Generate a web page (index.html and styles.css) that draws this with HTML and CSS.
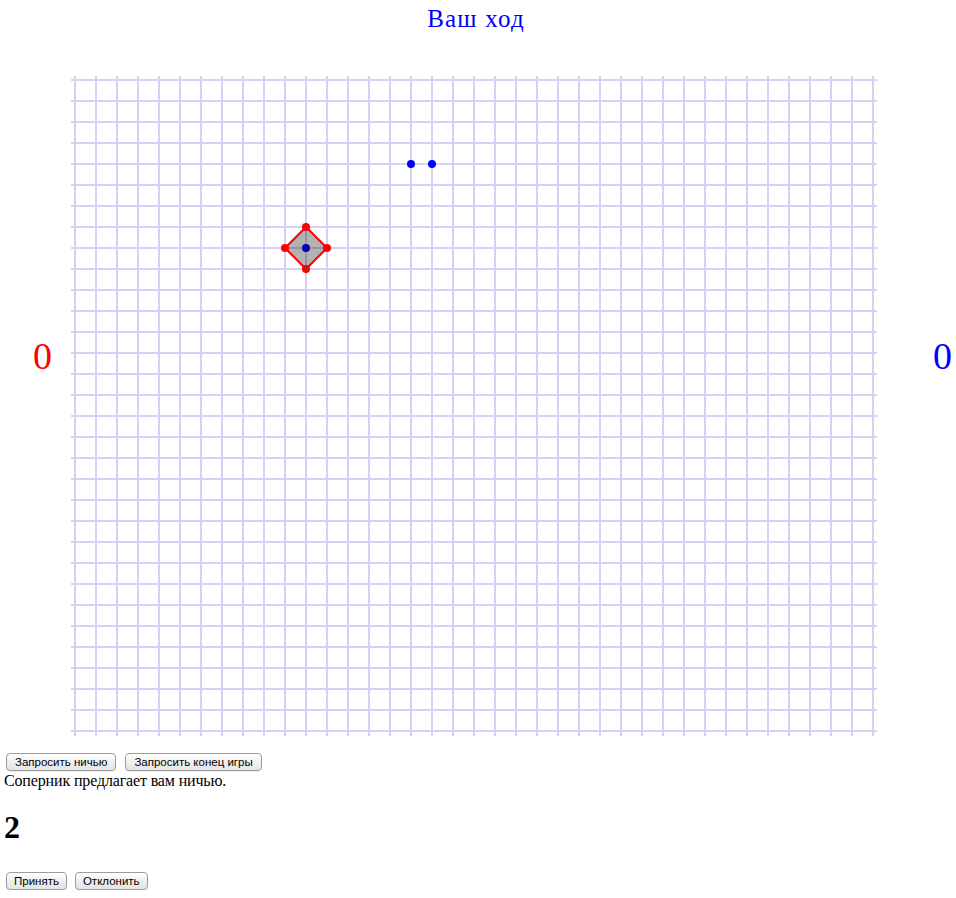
FILE: index.html
```html
<!DOCTYPE html>
<html lang="ru">
<head>
<meta charset="utf-8">
<title>Игра</title>
<link rel="stylesheet" href="styles.css">
</head>
<body>
<div class="title">Ваш ход</div>
<div class="board">
  <div class="score score-red">0</div>
  <svg class="field" width="808" height="664" viewBox="0 0 808 664" xmlns="http://www.w3.org/2000/svg">
    <path class="grid" d="M5 2V662M26 2V662M47 2V662M68 2V662M89 2V662M110 2V662M131 2V662M152 2V662M173 2V662M194 2V662M215 2V662M236 2V662M257 2V662M278 2V662M299 2V662M320 2V662M341 2V662M362 2V662M383 2V662M404 2V662M425 2V662M446 2V662M467 2V662M488 2V662M509 2V662M530 2V662M551 2V662M572 2V662M593 2V662M614 2V662M635 2V662M656 2V662M677 2V662M698 2V662M719 2V662M740 2V662M761 2V662M782 2V662M803 2V662
    M1 6H807M1 27H807M1 48H807M1 69H807M1 90H807M1 111H807M1 132H807M1 153H807M1 174H807M1 195H807M1 216H807M1 237H807M1 258H807M1 279H807M1 300H807M1 321H807M1 342H807M1 363H807M1 384H807M1 405H807M1 426H807M1 447H807M1 468H807M1 489H807M1 510H807M1 531H807M1 552H807M1 573H807M1 594H807M1 615H807M1 636H807M1 657H807"/>
    <circle class="dot-blue" cx="341" cy="90" r="4"/>
    <circle class="dot-blue" cx="362" cy="90" r="4"/>
    <circle class="dot-blue" cx="236" cy="174" r="4"/>
    <polygon class="area" points="236,153 257,174 236,195 215,174"/>
    <circle class="dot-red" cx="236" cy="153" r="4"/>
    <circle class="dot-red" cx="257" cy="174" r="4"/>
    <circle class="dot-red" cx="236" cy="195" r="4"/>
    <circle class="dot-red" cx="215" cy="174" r="4"/>
  </svg>
  <div class="score score-blue">0</div>
</div>
<div class="controls">
  <div class="actions actions-top">
    <button class="btn" type="button">Запросить ничью</button>
    <button class="btn" type="button">Запросить конец игры</button>
  </div>
  <p class="notice">Соперник предлагает вам ничью.</p>
  <h1 class="counter">2</h1>
  <div class="actions actions-bottom">
    <button class="btn btn-small" type="button">Принять</button>
    <button class="btn btn-small" type="button">Отклонить</button>
  </div>
</div>
</body>
</html>
```
FILE: styles.css
```css
html, body {
  margin: 0;
  padding: 0;
  background: #ffffff;
}

body {
  font-family: "Liberation Serif", "Times New Roman", serif;
  color: #000000;
}

.title {
  text-align: center;
  color: #0000ff;
  font-size: 25px;
  letter-spacing: 1.2px;
  line-height: 28px;
  padding-top: 5px;
  padding-right: 4px;
}

.board {
  display: flex;
  align-items: flex-start;
  margin-top: 41px;
}

.score {
  font-size: 38px;
  line-height: 42px;
  margin-top: 261px;
  box-sizing: border-box;
}

.score-red {
  color: #ff0000;
  flex: 0 0 70px;
  padding-left: 33px;
}

.score-blue {
  color: #0000ff;
  padding-left: 55px;
}

.field {
  display: block;
  flex: 0 0 auto;
}

.grid {
  stroke: #d6d0f2;
  stroke-width: 2;
  fill: none;
}

.dot-blue {
  fill: #0000ff;
}

.dot-red {
  fill: #ff0000;
}

.area {
  fill: rgba(0, 0, 0, 0.3);
  stroke: #ff0000;
  stroke-width: 2;
  stroke-linejoin: round;
}

.controls {
  padding-left: 4px;
}

.actions {
  display: flex;
  gap: 9px;
  margin-left: 2px;
}

.actions-top {
  margin-top: 15px;
}

.actions-bottom {
  gap: 8px;
  margin-top: 26px;
}

.btn {
  font-family: "Liberation Sans", Arial, sans-serif;
  font-size: 11.5px;
  height: 18px;
  line-height: 16px;
  padding: 0 8px;
  margin: 0;
  color: #000000;
  border: 1px solid #9c9c9c;
  border-radius: 4px;
  background: linear-gradient(#ffffff, #f0f0f0 50%, #e4e4e4);
  box-shadow: 0 1px 1px rgba(0, 0, 0, 0.08);
}

.btn-small {
  padding: 0 7px;
}

.notice {
  margin: 1px 0 0;
  font-size: 16px;
  letter-spacing: -0.15px;
}

.counter {
  margin: 19px 0 0;
  font-size: 32px;
  line-height: 37px;
  font-weight: bold;
}
```
